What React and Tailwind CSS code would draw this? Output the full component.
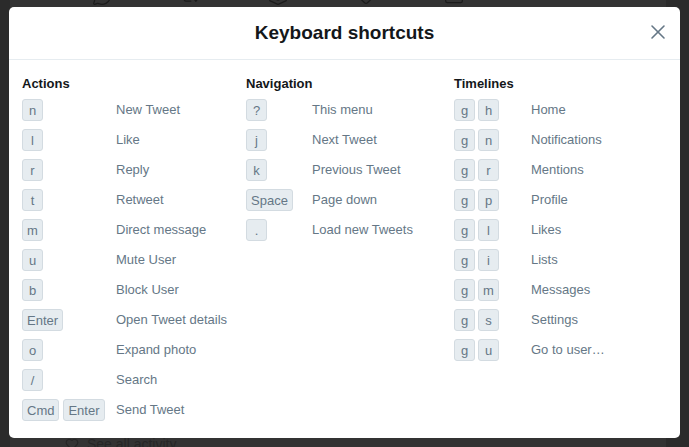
import React from "react";
import { MessageCircle, Repeat2, Layers, Heart, Mail, X } from "lucide-react";

const sections = [
  {
    title: "Actions",
    width: "w-[224px]",
    keyWidth: "w-[94px]",
    gap: "gap-[4px]",
    items: [
      [["n"], "New Tweet"],
      [["l"], "Like"],
      [["r"], "Reply"],
      [["t"], "Retweet"],
      [["m"], "Direct message"],
      [["u"], "Mute User"],
      [["b"], "Block User"],
      [["Enter"], "Open Tweet details"],
      [["o"], "Expand photo"],
      [["/"], "Search"],
      [["Cmd", "Enter"], "Send Tweet"],
    ],
  },
  {
    title: "Navigation",
    width: "w-[208px]",
    keyWidth: "w-[66px]",
    gap: "gap-[4px]",
    items: [
      [["?"], "This menu"],
      [["j"], "Next Tweet"],
      [["k"], "Previous Tweet"],
      [["Space"], "Page down"],
      [["."], "Load new Tweets"],
    ],
  },
  {
    title: "Timelines",
    width: "flex-1",
    keyWidth: "w-[77px]",
    gap: "gap-[3px]",
    items: [
      [["g", "h"], "Home"],
      [["g", "n"], "Notifications"],
      [["g", "r"], "Mentions"],
      [["g", "p"], "Profile"],
      [["g", "l"], "Likes"],
      [["g", "i"], "Lists"],
      [["g", "m"], "Messages"],
      [["g", "s"], "Settings"],
      [["g", "u"], "Go to user…"],
    ],
  },
];

const Key = ({ label }) => (
  <span className="h-[22px] min-w-[21px] px-[4px] flex items-center justify-center rounded-[3px] border border-[#d3dbe1] bg-[#e6ecf0] text-[13px] text-[#657786] leading-none">
    {label}
  </span>
);

const Section = ({ section }) => (
  <div className={section.width}>
    <h3 className="text-[13px] font-bold text-[#14171a] leading-[16px]">
      {section.title}
    </h3>
    <div className="mt-[7px] flex flex-col gap-[8px]">
      {section.items.map(([keys, label]) => (
        <div key={label} className="flex items-center h-[22px]">
          <div className={`${section.keyWidth} flex ${section.gap} shrink-0`}>
            {keys.map((k, i) => (
              <Key key={i} label={k} />
            ))}
          </div>
          <span className="text-[13px] text-[#657786] whitespace-nowrap">
            {label}
          </span>
        </div>
      ))}
    </div>
  </div>
);

export default function App() {
  return (
    <div
      className="relative w-[689px] h-[447px] overflow-hidden bg-[#2b2b2b]"
      style={{ fontFamily: '"Liberation Sans", Arial, sans-serif' }}
    >
      {/* page behind the overlay */}
      <div className="ml-[10px] w-[656px] h-full bg-[#333333] flex flex-col justify-between">
        <div className="flex mt-[-14px] pl-[82px] gap-[68px] text-[#1c1c1c]">
          <MessageCircle size={20} strokeWidth={1.5} />
          <Repeat2 size={20} strokeWidth={1.5} />
          <Layers size={20} strokeWidth={1.5} />
          <Heart size={20} strokeWidth={1.5} />
          <Mail size={20} strokeWidth={1.5} />
        </div>
        <div className="flex items-center gap-[8px] pl-[55px] mb-[-4px] h-[14px] text-[#262626] text-[14px] leading-[14px]">
          <Heart size={14} strokeWidth={2} />
          <span>See all activity</span>
        </div>
      </div>

      {/* modal */}
      <div className="absolute left-[9px] top-[7px] w-[671px] h-[431px] bg-white rounded-[5px]">
        <div className="relative h-[53px] border-b border-[#e6ecf0] flex items-center justify-center">
          <h2 className="text-[19px] font-bold text-[#14171a]">Keyboard shortcuts</h2>
          <button className="absolute right-[10px] top-[13px] text-[#657786]">
            <X size={24} strokeWidth={1.6} />
          </button>
        </div>
        <div className="flex pl-[13px] pt-[16px]">
          {sections.map((s) => (
            <Section key={s.title} section={s} />
          ))}
        </div>
      </div>
    </div>
  );
}
